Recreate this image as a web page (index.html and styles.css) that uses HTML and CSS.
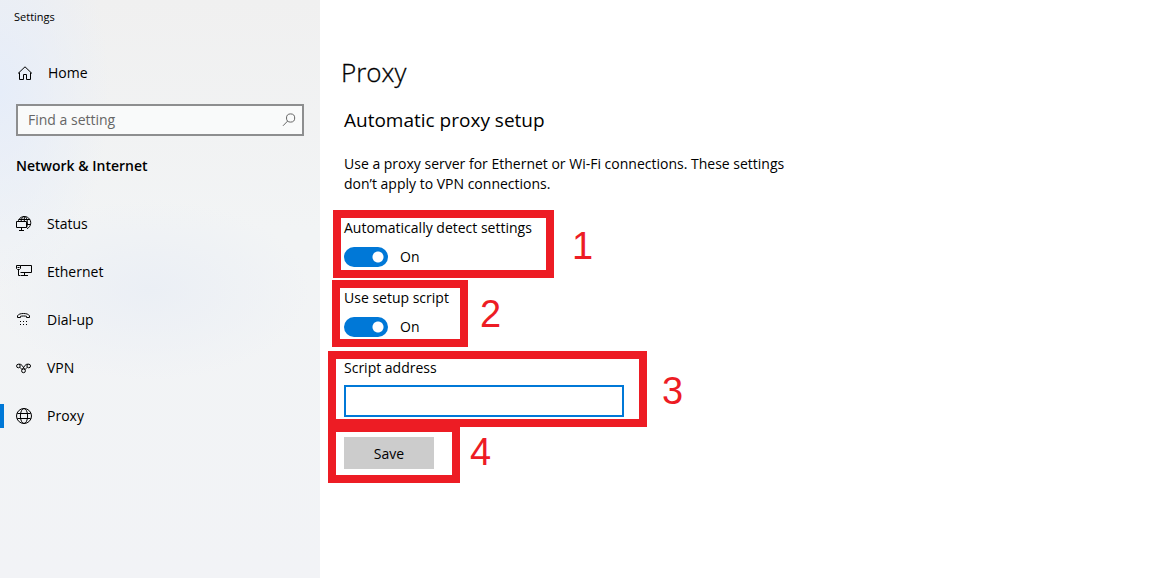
FILE: index.html
```html
<!DOCTYPE html>
<html lang="en">
<head>
<meta charset="utf-8">
<title>Settings</title>
<link rel="stylesheet" href="styles.css">
</head>
<body>
<div class="window">
  <aside class="sidebar">
    <div class="window-title">Settings</div>
    <a class="nav-link home" href="#home">
      <svg class="icon" viewBox="0 0 16 16"><path d="M1 8.500 8 1.800l7 6.700M2.500 7.500v7h4v-5h3v5h4v-7"/></svg>
      <span>Home</span>
    </a>
    <form class="search">
      <input class="search-input" type="text" placeholder="Find a setting" aria-label="Find a setting">
      <button class="search-button" type="button" aria-label="Search">
        <svg class="search-icon" viewBox="0 0 14 14"><circle cx="8.600" cy="5" r="4.100"/><path d="M5.700 8 1 12.800"/></svg>
      </button>
    </form>
    <h2 class="section-title">Network &amp; Internet</h2>
    <nav class="nav">
      <a class="nav-link" href="#status">
        <svg class="icon" viewBox="0 0 16 16"><path d="M2.300 4.800a6.400 6.400 0 1 1 8.700 7.900M5 5.500C5.400 2.200 6.700.4 8.200.4s3.300 2.600 3.300 6.200c0 2-.3 3.700-.9 4.900M8.300.4v5.100M2.700 3.500h11.200M11 8.500h3.300M.5 5.500h10v6H.5zM5.500 11.500v3M3 14.500h5"/></svg>
        <span>Status</span>
      </a>
      <a class="nav-link" href="#ethernet">
        <svg class="icon" viewBox="0 0 16 16"><path d="M4.500 1.500h11v7h-11M.5 1.500h4v3l-1 1h-2l-1-1zM2.500 5.500v6h2M8.500 8.500v3M5 11.500h7M1.500 3.500h2"/></svg>
        <span>Ethernet</span>
      </a>
      <a class="nav-link" href="#dial-up">
        <svg class="icon" viewBox="0 0 16 16"><path d="M1.500 5.500V3.800C2.500 2.200 4.500 1.500 7.500 1.500s5 .7 6 2.300v1.700h-3V4.300C9.500 3.900 5.500 3.900 4.500 4.300v1.200z"/><path class="dots" d="M4 9h1v1H4zM7 9h1v1H7zM10 9h1v1h-1zM4 12h1v1H4zM7 12h1v1H7zM10 12h1v1h-1z"/></svg>
        <span>Dial-up</span>
      </a>
      <a class="nav-link" href="#vpn">
        <svg class="icon" viewBox="0 0 16 16"><circle cx="2.400" cy="6" r="1.800"/><circle cx="12.700" cy="6" r="1.800"/><circle cx="7.500" cy="10.800" r="1.900"/><path d="M3.700 7.300C5 8.500 5.500 8.500 6.100 9.500M2.800 4.200c2.400-.2 2.900.8 3.700 1.900l2.400 3.400M11.400 7.300C10.100 8.500 9.600 8.500 9 9.500M12.300 4.200c-2.400-.2-2.900.8-3.700 1.900L6.200 9.500"/></svg>
        <span>VPN</span>
      </a>
      <a class="nav-link is-current" href="#proxy" aria-current="page">
        <svg class="icon" viewBox="0 0 16 16"><circle cx="8" cy="8" r="7.500"/><ellipse cx="8" cy="8" rx="3.600" ry="7.500"/><path d="M1.300 5.500h13.400M1.300 10.500h13.400"/></svg>
        <span>Proxy</span>
      </a>
    </nav>
  </aside>

  <main class="content">
    <h1 class="page-title">Proxy</h1>
    <h2 class="group-title">Automatic proxy setup</h2>
    <p class="description">Use a proxy server for Ethernet or Wi-Fi connections. These settings don’t apply to VPN connections.</p>
    <form class="fields">
      <div class="field">
        <label class="label" for="detect">Automatically detect settings</label>
        <div class="toggle-row"><input class="toggle" id="detect" type="checkbox" role="switch" checked><span>On</span></div>
        <div class="callout callout-detect"><span>1</span></div>
      </div>
      <div class="field">
        <label class="label" for="script">Use setup script</label>
        <div class="toggle-row"><input class="toggle" id="script" type="checkbox" role="switch" checked><span>On</span></div>
        <div class="callout callout-script"><span>2</span></div>
      </div>
      <div class="field">
        <label class="label" for="address">Script address</label>
        <input class="address" id="address" type="text">
        <div class="callout callout-address"><span>3</span></div>
      </div>
      <div class="field">
        <button class="save" type="button">Save</button>
        <div class="callout callout-save"><span>4</span></div>
      </div>
    </form>
  </main>
</div>
</body>
</html>
```
FILE: styles.css
```css
* { box-sizing: border-box; }

body {
  margin: 0;
  background: #fff;
  color: #000;
  font: 14px/20px "Open Sans", "Noto Sans", sans-serif;
}

h1, h2, p { margin: 0; font-weight: 400; }

input, button { font: inherit; color: inherit; border-radius: 0; margin: 0; }

.window { display: flex; min-height: 100vh; }

.sidebar {
  flex: 0 0 320px;
  padding-top: 8px;
  background:
    radial-gradient(ellipse 110px 200px at 0 90px, #e6edf9, #e6edf900),
    radial-gradient(ellipse 160px 90px at 150px 290px, #ebeff5, #ebeff500),
    linear-gradient(#f0f0f0, #f2f4f5 40%, #f2f3f6);
}

.window-title { padding-left: 14px; font-size: 11px; line-height: 18px; }

.nav-link {
  display: flex;
  align-items: center;
  gap: 15px;
  height: 48px;
  padding-left: 16px;
  color: inherit;
  text-decoration: none;
}

.home { margin-top: 23px; padding-left: 17px; }

.icon {
  width: 16px;
  height: 16px;
  fill: none;
  stroke: #000;
  stroke-width: 1;
}

.icon .dots { fill: #000; stroke: none; }

.search {
  display: flex;
  height: 32px;
  margin: 7px 16px 0;
  border: 2px solid #8d8e8f;
  background: #f9fafa;
}

.search-input {
  flex: 1;
  min-width: 0;
  padding: 0 10px;
  border: 0;
  outline: 0;
  background: none;
}

.search-input::placeholder { color: #666; opacity: 1; }

.search-button {
  display: flex;
  align-items: center;
  padding: 0 6px;
  border: 0;
  background: none;
}

.search-icon { width: 14px; height: 14px; fill: none; stroke: #666; }

.section-title {
  padding: 20px 16px 0;
  font-size: 14px;
  font-weight: 600;
}

.nav { margin-top: 24px; }

.is-current {
  background: linear-gradient(#0078d7, #0078d7) left center / 4px 24px no-repeat;
}

.content { flex: 1; min-width: 0; padding: 52px 24px 24px; }

.page-title { margin-left: -3px; font-size: 26px; font-weight: 300; line-height: 40px; -webkit-text-stroke: 0.3px #000; }

.group-title { margin-top: 14px; font-size: 19px; line-height: 28px; }

.description { max-width: 460px; margin-top: 20px; }

.fields { margin-top: 24px; }

.field { position: relative; margin-bottom: 20px; }

.label { display: block; }

.toggle-row { display: flex; align-items: center; gap: 12px; margin: 9px 0 21px; }

.toggle {
  appearance: none;
  width: 44px;
  height: 20px;
  border-radius: 10px;
  background: radial-gradient(circle at 34px 10px, #fff 5px, #0078d7 6px);
}

.address {
  display: block;
  width: 280px;
  max-width: 100%;
  height: 32px;
  margin-top: 7px;
  padding: 0 10px;
  border: 2px solid #0078d7;
  outline: 0;
  background: #fff;
}

.save {
  display: block;
  width: 90px;
  height: 32px;
  padding: 2px 0 0;
  border: 0;
  background: #ccc;
}

/* Numbered frames drawn over the fields */
.callout {
  position: absolute;
  display: flex;
  align-items: center;
  border: 8px solid #ed1c24;
  color: #ed1c24;
  font: 38px/40px "Liberation Sans", Arial, sans-serif;
  pointer-events: none;
}

.callout span { position: absolute; left: 100%; padding-left: 20px; }

.callout-detect { top: -8px; left: -11px; width: 221px; height: 68px; }
.callout-detect span { padding: 4px 0 0 26px; }
.callout-script { top: -8px; left: -12px; width: 136px; height: 67px; }
.callout-address { top: -7px; left: -16px; width: 319px; height: 76px; }
.callout-address span { padding: 4px 0 0 23px; }
.callout-save { top: -13px; left: -16px; width: 132px; height: 59px; }
.callout-save span { padding: 0 0 4px 18px; }
```
